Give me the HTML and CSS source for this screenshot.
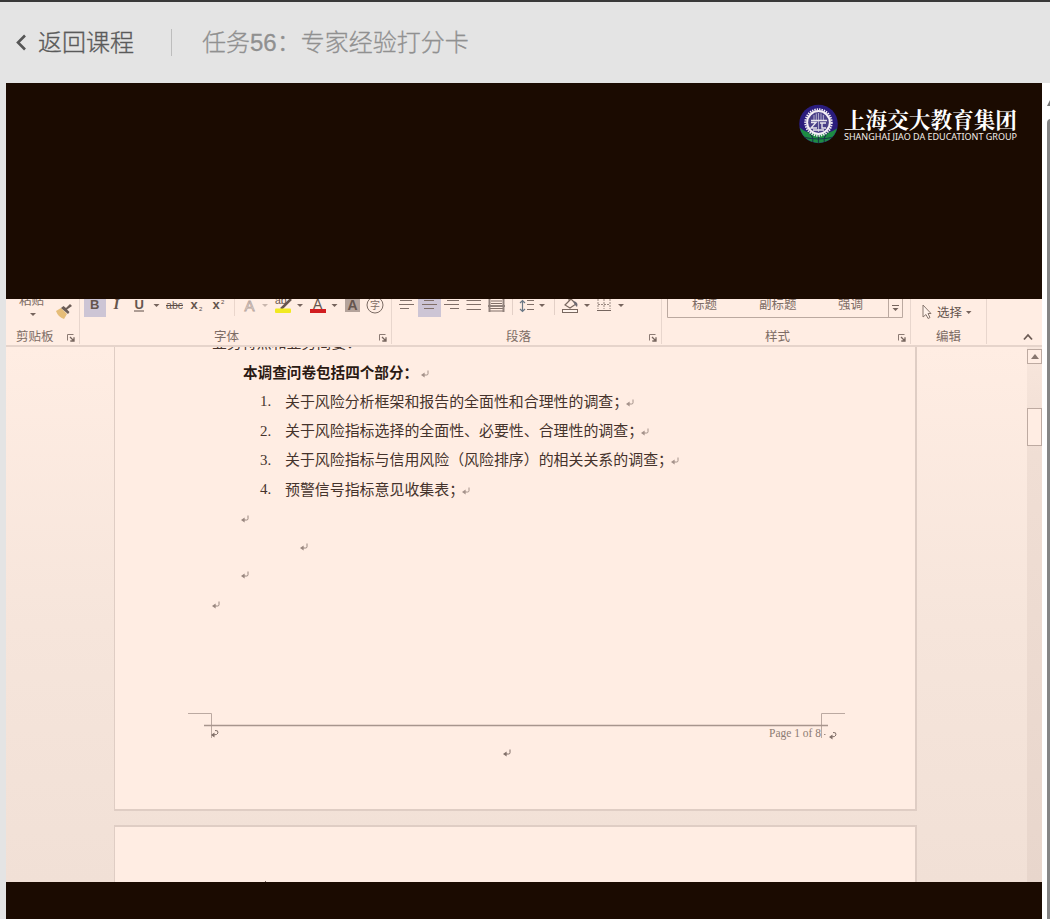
FILE: index.html
```html
<!DOCTYPE html>
<html lang="zh-CN">
<head>
<meta charset="utf-8">
<title>任务56：专家经验打分卡</title>
<link rel="stylesheet" href="styles.css">
</head>
<body>
<svg class="defs" width="0" height="0" aria-hidden="true">
  <symbol id="ret" viewBox="0 0 8 8"><path d="M7 .5V3.7Q7 5 5.7 5H2" fill="none" stroke="currentColor" stroke-width="1"/><path d="M0 5L3.6 2.4V7.6Z" fill="currentColor"/></symbol>
  <symbol id="launch" viewBox="0 0 8 8"><path d="M.5 6.5V.5H6.5" fill="none" stroke="#8b7a73"/><path d="M3 3L6.500 6.500M7 3.300V7H3.300" fill="none" stroke="#75645d" stroke-width="1.3"/></symbol>
</svg>
<header class="topbar">
  <a class="back"><svg width="12" height="18" viewBox="0 0 12 18"><path d="M11 1.500L4 8.500L11 15.500" fill="none" stroke="#555" stroke-width="2.6"/></svg><span>返回课程</span></a>
  <h1 class="title">任务56：专家经验打分卡</h1>
</header>
<main class="stage">
  <section class="player">
    <div class="letterbox-top">
      <svg class="brand" width="220" height="42" viewBox="798 103 220 42">
        <clipPath id="globe"><circle cx="818.5" cy="124" r="19"/></clipPath>
        <circle cx="818.5" cy="124" r="19.3" fill="#2a1c7c"/>
        <g clip-path="url(#globe)">
          <path d="M798 126Q806 134 818 134Q831 134 840 126V145H798Z" fill="#1d8b43"/>
          <path d="M818.5 133V144M807 131Q815 136 812 144M830 131Q822 136 825 144M803 137Q818 141 834 137" fill="none" stroke="#173b48" stroke-width="1.2"/>
        </g>
        <circle cx="818.5" cy="122.500" r="13.2" fill="none" stroke="#f4f0f5" stroke-width="2" stroke-dasharray="1.4 1"/>
        <circle cx="818.5" cy="122.500" r="11.4" fill="#4a4088" stroke="#f4f0f5" stroke-width="2"/>
        <path d="M818.500 113V132M814 115V120M816.300 113.500V120M821 113.500V120M823.400 115V120" fill="none" stroke="#aaa5c8" stroke-width="1.1"/>
        <path d="M811 120.500H827M811 122.500H816L811 128H817M820 123H826M822 123V128H826M813 130H824" fill="none" stroke="#e6e3ec" stroke-width="1.4"/>
        <text class="brand-cn" x="844" y="127.500" textLength="173" lengthAdjust="spacingAndGlyphs">上海交大教育集团</text>
        <text class="brand-en" x="844" y="139.900" textLength="173" lengthAdjust="spacingAndGlyphs">SHANGHAI JIAO DA EDUCATIONT GROUP</text>
      </svg>
    </div>
    <div class="ribbon">
      <div class="group">
        <svg class="tools" width="73" height="28" viewBox="6 299 73 28">
          <text class="ui" x="19" y="304.500">粘贴</text>
          <path d="M30 313H36L33 316Z" fill="#76645d"/>
          <path d="M56 311L61 308L67 314L64 319Q58 317 56 311Z" fill="#e6bd78"/>
          <path d="M61 308L68 314L69.500 312L67 309.500L72 306L70 304L66 308L63.500 306Z" fill="#6c5d57"/>
        </svg>
        <div class="caption cap-clip"><span>剪贴板</span><svg class="launch" width="8" height="8"><use href="#launch"/></svg></div>
      </div>
      <div class="group">
        <svg class="tools" width="311" height="28" viewBox="80 299 311 28">
          <rect x="84" y="297" width="22" height="20" fill="#cdc5d5"/>
          <text class="fmt b" x="90" y="309">B</text>
          <text class="fmt i" x="113.500" y="309">I</text>
          <text class="fmt b" x="134.500" y="308.500">U</text><path d="M134 311H144" stroke="#5c4c46"/>
          <path d="M153.500 304H159.500L156.500 307Z" fill="#76645d"/>
          <text class="fmt small" x="166" y="309" textLength="17">abc</text><path d="M166 305.500H183" stroke="#5c4c46"/>
          <text class="fmt b" x="190.500" y="309">x</text><text class="tiny" x="199" y="311">2</text>
          <text class="fmt b" x="212.500" y="309">x</text><text class="tiny" x="221" y="304">2</text>
          <path d="M234.500 299V316" stroke="#ead6cc"/>
          <text class="ghost" x="244.500" y="310.500">A</text>
          <path d="M262 304H268L265 307Z" fill="#c9b7ae"/>
          <text class="fmt small" x="275" y="304">ab</text><path d="M281 309L291 299" stroke="#65554e" stroke-width="2.5"/>
          <rect x="275" y="308.500" width="16" height="4.500" rx="1" fill="#f1e921"/>
          <path d="M297 304H303L300 307Z" fill="#76645d"/>
          <text class="fmt a" x="313" y="308.500">A</text><rect x="310" y="309" width="16" height="4" fill="#d11d20"/>
          <path d="M331.500 304H337.500L334.500 307Z" fill="#76645d"/>
          <rect x="345" y="297" width="15" height="15" fill="#b4a39b"/><text class="fmt a b" x="347.500" y="309.500">A</text>
          <circle cx="375" cy="305" r="8" fill="none" stroke="#7b6b64"/><text class="ui circ" x="370" y="308.700">字</text>
        </svg>
        <div class="caption cap-font"><span>字体</span><svg class="launch" width="8" height="8"><use href="#launch"/></svg></div>
      </div>
      <div class="group">
        <svg class="tools" width="269" height="28" viewBox="392 299 269 28">
          <rect x="418" y="297" width="23" height="20" fill="#cdc5d5"/>
          <g stroke="#806f68" stroke-width="1.2">
            <path d="M400 300.500H412M399 304.500H414M400 308.500H409"/>
            <path d="M424 300.500H434M422 304.500H437M424 308.500H434"/>
            <path d="M447 300.500H459M444 304.500H459M450 308.500H459"/>
            <path d="M466.500 300.500H481M466.500 304.500H481M466.500 309.500H481"/>
            <path d="M491 301H502M491 303.500H502M489 308.500H504M489 311H504"/>
            <path d="M527 300.500H534M527 304.500H534M527 309.500H534"/>
          </g>
          <path d="M489.500 299V312M503.500 299V312M488 306H505" stroke="#91827c" stroke-width="2"/>
          <path d="M512.500 299V315M554.500 299V315" stroke="#e3d0c7"/>
          <path d="M522.500 301V311M520 303L522.500 300.500L525 303M520 309L522.500 311.500L525 309" fill="none" stroke="#6b7886" stroke-width="1.2"/>
          <path d="M539 304H545L542 307Z" fill="#76645d"/>
          <path d="M565 305L571 299L576 304L570 308ZM569 302V298" fill="none" stroke="#796860" stroke-width="1.2"/>
          <path d="M573 301Q579 302 577 307L575 305Z" fill="#6c6972"/>
          <rect x="562.500" y="309.500" width="15" height="3" fill="#fff4ed" stroke="#796860"/>
          <path d="M584 304H590L587 307Z" fill="#76645d"/>
          <path d="M598 299V309M604 299V309M610 299V309M598 304.500H610" stroke="#9a8981" stroke-dasharray="2 1"/><path d="M597 310.500H611" stroke="#75655e"/>
          <path d="M618 304H624L621 307Z" fill="#76645d"/>
        </svg>
        <div class="caption cap-par"><span>段落</span><svg class="launch" width="8" height="8"><use href="#launch"/></svg></div>
      </div>
      <div class="group">
        <svg class="tools" width="248" height="28" viewBox="662 299 248 28">
          <path d="M667.500 298V317.500H902.500V298M888.500 298V317" fill="none" stroke="#bba9a0"/>
          <text class="ui" x="692" y="308.500">标题</text>
          <text class="ui" x="759" y="308.500">副标题</text>
          <text class="ui" x="838" y="308.500">强调</text>
          <path d="M892 305.500H899" stroke="#75645d"/><path d="M892.500 308H898.500L895.500 311Z" fill="#75645d"/>
        </svg>
        <div class="caption cap-style"><span>样式</span><svg class="launch" width="8" height="8"><use href="#launch"/></svg></div>
      </div>
      <div class="group">
        <svg class="tools" width="75" height="28" viewBox="911 299 75 28">
          <path d="M923 305V317L926 314.500L928 318.500L930 317.500L928 313.500H931Z" fill="#fff2eb" stroke="#88776f"/>
          <text class="ui dark" x="937" y="316.500">选择</text>
          <path d="M966 311H971.500L968.700 314Z" fill="#76645d"/>
        </svg>
        <div class="caption cap-edit"><span>编辑</span></div>
      </div>
      <div class="collapse"><svg width="10" height="8" viewBox="0 0 10 8"><path d="M1 6.500L5 2L9 6.500" fill="none" stroke="#6d5c55" stroke-width="1.8"/></svg></div>
    </div>
    <div class="workspace">
      <div class="pages">
        <article class="page">
          <p class="cut">业务特点和业务简要：</p>
          <p class="lead">本调查问卷包括四个部分：<svg class="ret"><use href="#ret"/></svg></p>
          <ol class="items">
            <li><b>1.</b><span>关于风险分析框架和报告的全面性和合理性的调查；</span><svg class="ret"><use href="#ret"/></svg></li>
            <li><b>2.</b><span>关于风险指标选择的全面性、必要性、合理性的调查；</span><svg class="ret"><use href="#ret"/></svg></li>
            <li><b>3.</b><span>关于风险指标与信用风险（风险排序）的相关关系的调查；</span><svg class="ret"><use href="#ret"/></svg></li>
            <li><b>4.</b><span>预警信号指标意见收集表；</span><svg class="ret"><use href="#ret"/></svg></li>
          </ol>
          <svg class="blank" width="801" height="110" viewBox="115 504 801 110">
            <g color="#98867e"><use href="#ret" x="241" y="515" width="8" height="8"/><use href="#ret" x="300" y="543" width="8" height="8"/><use href="#ret" x="241" y="571" width="8" height="8"/><use href="#ret" x="212" y="601" width="8" height="8"/></g>
          </svg>
          <svg class="footer" width="801" height="60" viewBox="115 704 801 60">
            <path d="M188 713.500H211.500V738M845 713.500H821.500V738" fill="none" stroke="#bba9a1"/>
            <path d="M204 725.500H828" stroke="#a7958d" stroke-width="1.3"/>
            <text class="folio" x="769" y="737" textLength="52" lengthAdjust="spacingAndGlyphs">Page 1 of 8</text>
            <path d="M824 734.500H825.500" stroke="#9c8a82"/>
            <g fill="none" stroke="#806f68"><path d="M215 730.500Q218.500 730 218 733Q217.500 735 213 735"/><path d="M833 732.500Q836.500 732 836 735Q835.500 737 831 737"/></g>
            <path d="M211 735L214.500 732.500V737.500ZM829 737L832.500 734.500V739.500Z" fill="#806f68"/>
            <use href="#ret" x="503" y="749" width="8" height="8" color="#806f68"/>
          </svg>
        </article>
        <article class="page next"><svg width="801" height="55"><path d="M150.500 54V55" stroke="#75645d"/></svg></article>
      </div>
      <div class="scroll">
        <div class="scroll-up"><svg width="8" height="5"><path d="M0 5H8L4 0Z" fill="#89776f"/></svg></div>
        <div class="scroll-thumb"></div>
      </div>
    </div>
  </section>
  <aside class="rail"><svg width="3" height="9" viewBox="0 0 3 9"><path d="M0 8L3 2V8Z" fill="#777"/></svg><div class="rail-thumb"></div></aside>
</main>
</body>
</html>
```
FILE: styles.css
```css
* { box-sizing: border-box; }
body { margin: 0; width: 1050px; height: 919px; overflow: hidden; background: #e4e4e4; font-family: "Liberation Sans", "Noto Sans CJK SC", sans-serif; }
.defs { position: absolute; }
svg { display: block; flex: none; }
p, ol, h1 { margin: 0; padding: 0; }

.topbar { height: 83px; border-top: 2px solid #393939; display: flex; align-items: center; padding-left: 14px; font-size: 24px; line-height: 36px; }
.back { display: flex; align-items: center; gap: 12px; width: 158px; height: 27px; border-right: 1px solid #bdbdbd; color: #5a5a5a; -webkit-text-stroke: .35px #5a5a5a; }
.back, .title { font-weight: 300; white-space: nowrap; }
.title { margin-left: 30px; font-size: 24px; color: #909090; -webkit-text-stroke: .3px #909090; }
.back span, .title { padding-top: 1px; }

.stage { display: flex; height: 836px; padding-left: 6px; }
.player { width: 1036px; height: 836px; background: #1b0b01; display: flex; flex-direction: column; }
.letterbox-top { height: 216px; padding: 20px 24px 0 0; display: flex; justify-content: flex-end; }
.brand-cn { font: 700 21.5px "Noto Serif CJK SC", "Noto Sans CJK SC", serif; fill: #fff; }
.brand-en { font: 8px "Noto Sans", sans-serif; fill: #f3eeea; }

.ribbon { height: 48px; flex: none; display: grid; grid-template-columns: 74px 312px 270px 249px 76px 1fr; background: #ffede3; border-bottom: 2px solid #e6d4cb; }
.group { height: 45px; border-right: 1px solid #e8d6cd; overflow: hidden; }
.caption { display: flex; justify-content: space-between; align-items: center; height: 17px; padding: 1px 4px 0 0; font-size: 12.5px; line-height: 17px; color: #7d6c65; }
.caption span { padding-top: 2px; }
.launch { margin-top: 4px; }
.caption.cap-clip { padding-left: 10px; }
.caption.cap-font { padding-left: 134px; }
.caption.cap-par { padding-left: 114px; }
.caption.cap-style { padding-left: 103px; }
.caption.cap-edit { padding-left: 25px; }
.ui { font-size: 12.5px; fill: #7d6c65; }
.ui.dark { fill: #65554e; }
.ui.circ { font-size: 10px; }
.fmt { font: 13px "Liberation Sans", sans-serif; fill: #65554e; }
.fmt.b { font-weight: 700; }
.fmt.i { font-family: "Liberation Serif", serif; font-style: italic; font-weight: 700; font-size: 15px; }
.fmt.small { font-size: 10.5px; }
.fmt.a { font-size: 14px; }
.tiny { font-size: 6px; fill: #5c4c46; }
.ghost { font: 15px "Liberation Sans", sans-serif; fill: #fff3ec; stroke: #b5a49c; stroke-width: .8px; }
.collapse { padding: 34px 0 0 36px; }

.workspace { height: 535px; flex: none; display: flex; overflow: hidden; background: linear-gradient(#ffede3 0%, #f6e5db 52%, #f1e0d6 100%); }
.pages { width: 1021px; padding-left: 108px; }
.page { width: 803px; height: 464px; background: #ffede3; border: 2px solid #dfcdc4; border-width: 0 2px 2px 1px; overflow: hidden; }
.page.next { height: 60px; margin-top: 14px; border-width: 2px 2px 0 1px; }
.page p, .items { color: #45332c; font-size: 14.93px; font-family: "Liberation Serif", "Noto Sans CJK SC", serif; }
.page .cut { height: 3px; padding-left: 97px; overflow: hidden; line-height: 14px; display: flex; align-items: flex-end; }
.page .lead { height: 37px; padding: 9px 0 0 128px; display: flex; align-items: center; font-size: 14.6px; line-height: 28px; font-weight: 700; color: #2b1a13; }
.items { list-style: none; height: 118px; }
.items li { display: flex; align-items: center; height: 29.35px; padding-left: 145px; white-space: nowrap; }
.items span { margin-top: -3px; }
.items b { width: 25px; font-weight: 400; }
.ret { width: 8px; height: 8px; margin: 2px 0 0 -2px; color: #a4928a; }
.lead .ret { margin: 1px 0 0 3px; }
.blank { margin-top: -1px; }
.footer { margin-top: 90px; }
.folio { font: 11.5px "Liberation Serif", serif; fill: #8d7b73; }

.scroll { width: 15px; background: linear-gradient(#f8e6dc, #f0ded4 20%, #e8d6cc); padding-top: 2px; }
.scroll-up { height: 15px; border: 1px solid #bdaaa1; background: #ffede3; display: flex; align-items: center; justify-content: center; }
.scroll-thumb { margin-top: 44px; height: 38px; border: 1px solid #bdaaa1; background: #ffede3; }

.rail { width: 8px; height: 836px; background: #fff; padding: 15px 0 0 5px; }
.rail-thumb { width: 6px; height: 810px; margin-top: 12px; border-radius: 4px 0 0 0; background: #858585; }
```
